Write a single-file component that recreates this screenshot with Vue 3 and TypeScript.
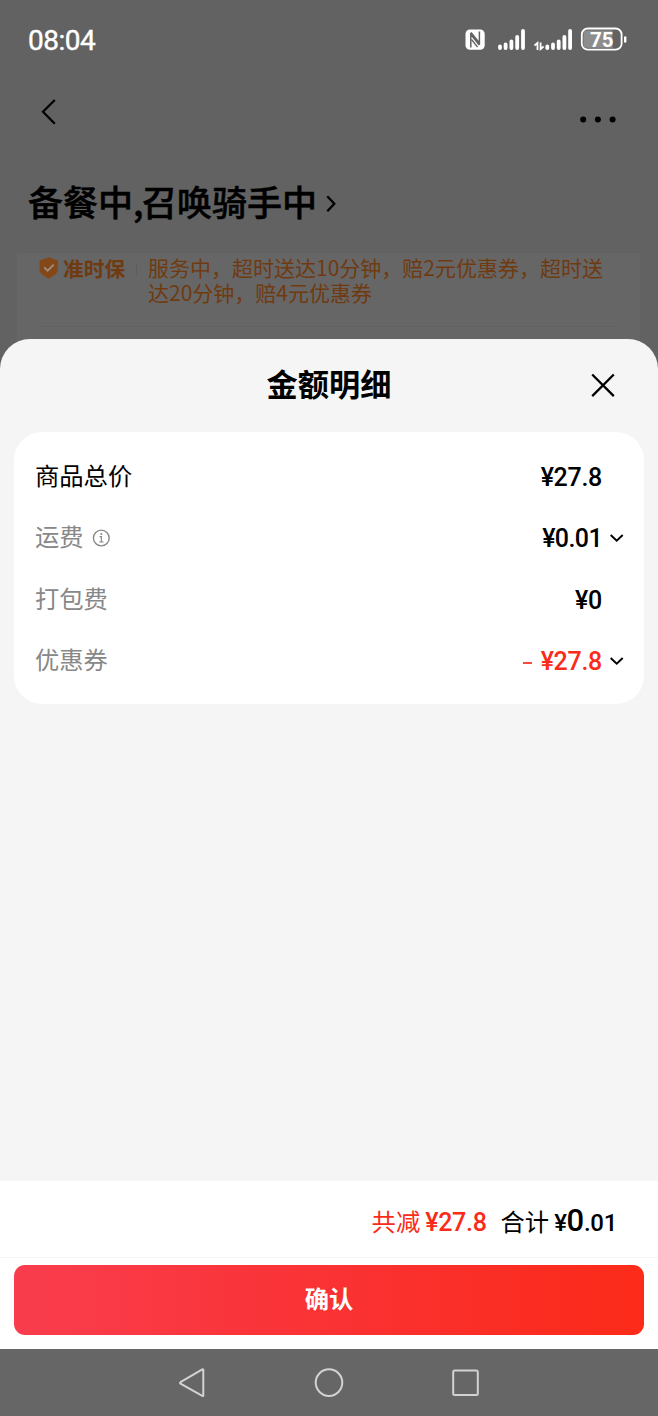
<script setup lang="ts">
interface FeeRow {
  label: string
  amount: string
  info?: boolean
  expandable?: boolean
  strong?: boolean
  discount?: boolean
}

const rows: FeeRow[] = [
  { label: '商品总价', amount: '¥27.8', strong: true },
  { label: '运费', amount: '¥0.01', info: true, expandable: true },
  { label: '打包费', amount: '¥0' },
  { label: '优惠券', amount: '¥27.8', expandable: true, discount: true },
]
</script>

<template>
  <div class="screen">
    <div class="backdrop">
      <header class="status">
        <span class="clock">08:04</span>
        <svg class="status-icons" width="166" height="28" viewBox="0 0 166 28">
          <rect x="2.500" y="4.500" width="19.200" height="20.200" rx="4.500" fill="#fff" />
          <path d="M7.800 22.500V9.500l8.500 10.500M16.400 6.500V18L8 7.500" fill="none" stroke="#626262" stroke-width="1.500" />
          <path d="M8.500 14.500l6 7.500" stroke="#626262" stroke-width="1.300" />
          <path d="M37 21.500v1.500M42.600 19.500v3.500M48.400 16.500v6.500M54.200 11.800v11.200M60 5.800v17.200" stroke="#fff" stroke-width="3.800" stroke-linecap="round" />
          <path d="M84.300 21.500v1.500M90 19.500v3.500M95.700 16.500v6.500M101.400 11.800v11.200M107.100 5.800v17.200" stroke="#fff" stroke-width="3.800" stroke-linecap="round" />
          <path d="M71.500 20.500l3-2.500v7M77.600 17.500v6.500l3-2.500" fill="none" stroke="#fff" stroke-width="1.800" />
          <rect x="118.800" y="3.500" width="39.800" height="21.200" rx="6" fill="none" stroke="#fff" stroke-width="1.800" />
          <path d="M123 5.500h26.500v17.200H123q-2.500 0-2.500-2.500v-12.200q0-2.500 2.500-2.500z" fill="#8d8d8d" />
          <path d="M162.200 12.500v4" stroke="#fff" stroke-width="2.400" stroke-linecap="round" />
          <text x="138.800" y="21.500" text-anchor="middle" class="battery">75</text>
        </svg>
      </header>

      <nav class="topbar">
        <svg width="20" height="30" viewBox="0 0 20 30">
          <path d="M16.800 4L5 15.700l11.800 12" fill="none" stroke="#000" stroke-width="2.300" />
        </svg>
        <svg width="38" height="8" viewBox="0 0 38 8">
          <circle cx="4.200" cy="4.500" r="3" /><circle cx="18.900" cy="4.500" r="3" /><circle cx="33.600" cy="4.500" r="3" />
        </svg>
      </nav>

      <h1 class="order-status">
        <span>备餐中<i class="comma">,</i>召唤骑手中</span>
        <svg width="12" height="20" viewBox="0 0 12 20">
          <path d="M1.300 3.300l7 7.500-7 7.500" fill="none" stroke="#000" stroke-width="2.300" />
        </svg>
      </h1>

      <section class="notice">
        <div class="notice-body">
          <svg class="shield" width="20" height="22" viewBox="0 0 20 22">
            <path d="M10.700.3l9.100 3.200v9c0 4.300-4.600 6.700-9.100 9.300-4.500-2.600-9.100-5-9.100-9.300v-9z" fill="#844818" />
            <path d="M6.200 10.300l3.500 3.400 6-6" fill="none" stroke="#9b9189" stroke-width="1.700" />
          </svg>
          <b class="badge">准时保</b>
          <p class="notice-text">服务中，超时送达10分钟，赔2元优惠券，超时送达20分钟，赔4元优惠券</p>
        </div>
      </section>
    </div>

    <main class="sheet">
      <div class="sheet-head">
        <h2>金额明细</h2>
        <svg class="close" width="26" height="26" viewBox="0 0 26 26">
          <path d="M2.200 1.500l21.600 21.600M23.800 1.500L2.200 23.100" stroke="#000" stroke-width="2.300" />
        </svg>
      </div>

      <div class="card">
        <div v-for="row in rows" :key="row.label" class="row" :class="{ strong: row.strong }">
          <span class="label">{{ row.label }}</span>
          <svg v-if="row.info" class="info" width="18" height="18" viewBox="0 0 18 18">
            <circle cx="9.300" cy="9" r="7.900" fill="none" stroke="#888" stroke-width="1.400" />
            <path d="M7.600 7.700H9.400v5.200M7.200 13h4.400" fill="none" stroke="#888" stroke-width="1.200" />
            <circle cx="9.300" cy="5" r="1" fill="#888" />
          </svg>
          <span v-if="row.discount" class="minus"></span>
          <span class="amount" :class="{ red: row.discount, long: row.info }">{{ row.amount }}</span>
          <span class="arrow">
            <svg v-if="row.expandable" width="14" height="10" viewBox="0 0 14 10">
              <path d="M.7 2l6 5.700 6-5.700" fill="none" stroke="#000" stroke-width="1.900" />
            </svg>
          </span>
        </div>
      </div>
    </main>

    <footer class="footer">
      <div class="totals">
        <span class="red">共减</span>
        <span class="num saved red">¥27.8</span>
        <span>合计</span>
        <span class="num total">¥<span class="big">0</span>.01</span>
      </div>
      <div class="action">
        <button class="confirm">确认</button>
      </div>
    </footer>

    <div class="navbar">
      <svg width="304" height="34" viewBox="0 0 304 34" fill="none" stroke="#d2d2d2" stroke-width="2">
        <path d="M26.300 4v25.400q0 1-1 .5L3.500 17.600q-1-.7 0-1.400L25.300 3.500q1-.5 1 .5z" />
        <circle cx="152" cy="16.600" r="13.300" />
        <rect x="276.200" y="4.400" width="24.600" height="24.600" rx="1.500" />
      </svg>
    </div>
  </div>
</template>

<style>
body {
  margin: 0;
}
</style>

<style scoped>
.screen {
  width: 658px;
  height: 1416px;
  display: flex;
  flex-direction: column;
  background: #626262;
  font-family: "Noto Sans CJK SC", sans-serif;
  color: #000;
  overflow: hidden;
}
.backdrop {
  height: 369px;
  margin-bottom: -30px;
  flex: none;
  overflow: hidden;
}
.status {
  height: 78px;
  display: flex;
  justify-content: space-between;
  align-items: center;
  padding: 0 28px;
  box-sizing: border-box;
}
.clock {
  padding-top: 3px;
  font: 400 28px/40px Roboto, sans-serif;
  letter-spacing: -0.500px;
  color: #fff;
  -webkit-text-stroke: 0.400px #fff;
}
.status-icons {
  margin-right: 1px;
}
.battery {
  font: 700 20.500px Roboto, sans-serif;
  fill: #fff;
}
.topbar {
  height: 30px;
  margin: 18px 41px 0 38px;
  display: flex;
  justify-content: space-between;
  align-items: center;
}
.topbar svg:last-child {
  margin-top: 16px;
}
.order-status {
  height: 44px;
  margin: 55px 0 0 28px;
  display: flex;
  align-items: center;
  gap: 9px;
  font-size: 35px;
  line-height: 40px;
  font-weight: 500;
  white-space: nowrap;
  -webkit-text-stroke: 0.500px #000;
}
.order-status > span {
  padding-bottom: 4px;
}
.comma {
  font-style: normal;
  display: inline-block;
  width: 9px;
}
.notice {
  height: 120px;
  margin: 28px 18px 0 17px;
  background: #666;
}
.notice-body {
  height: 74px;
  margin: 0 23px 0 21px;
  padding-top: 4px;
  display: flex;
  align-items: flex-start;
  box-sizing: border-box;
  border-bottom: 1px solid #616161;
}
.shield {
  flex: none;
  margin-right: 5px;
}
.badge {
  flex: none;
  width: 63px;
  font-size: 20.700px;
  line-height: 24px;
  margin-top: -1px;
  white-space: nowrap;
  color: #703a10;
}
.notice-text {
  margin: -2px 0 0 10px;
  padding-left: 12px;
  width: 460px;
  flex: none;
  font-size: 21px;
  line-height: 24.500px;
  color: #703a10;
  background: linear-gradient(#5d5d5d, #5d5d5d) 0 8px / 1px 12px no-repeat;
}
.sheet {
  position: relative;
  flex: 1;
  background: #f5f5f5;
  border-radius: 30px 30px 0 0;
}
.sheet-head {
  height: 93px;
  display: grid;
  grid-template-columns: 1fr auto 1fr;
  align-items: center;
}
.sheet-head h2 {
  grid-column: 2;
  margin: 0;
  padding-bottom: 5px;
  font-size: 31.200px;
  line-height: 40px;
  font-weight: 700;
}
.close {
  justify-self: end;
  margin-right: 42px;
}
.card {
  height: 272px;
  margin: 0 14px;
  padding: 14px 20px 0 21px;
  box-sizing: border-box;
  background: #fff;
  border-radius: 28px;
}
.row {
  height: 61.500px;
  display: flex;
  align-items: center;
}
.label {
  margin-right: auto;
  padding-bottom: 4px;
  font-size: 24.300px;
  line-height: 36px;
  color: #888;
}
.strong .label {
  color: #000;
}
.info {
  margin-right: auto;
}
.label:has(+ .info) {
  margin-right: 8px;
}
.minus {
  width: 9px;
  height: 2px;
  margin: 3px 9px 0 0;
  background: #fa4a40;
}
.amount {
  padding-top: 2px;
  font: 500 25px/36px Roboto, sans-serif;
  letter-spacing: -0.300px;
}
.long {
  letter-spacing: -0.600px;
}
.red {
  color: #fa2c19;
}
.arrow {
  width: 14px;
  margin-left: 8px;
  display: flex;
}
.footer {
  height: 168px;
  flex: none;
  background: #fff;
}
.totals {
  height: 77px;
  display: flex;
  justify-content: flex-end;
  align-items: baseline;
  padding: 21px 41px 0 0;
  box-sizing: border-box;
  font-size: 24.300px;
  line-height: 38px;
  border-bottom: 1px solid #f5f5f5;
}
.num {
  font-family: Roboto, sans-serif;
  font-weight: 500;
  font-size: 25px;
  letter-spacing: -0.300px;
  margin-left: 5px;
}
.saved {
  margin-right: 14px;
}
.total {
  font-size: 24px;
}
.big {
  font-size: 31px;
}
.action {
  padding: 7px 14px 0;
}
.confirm {
  display: block;
  width: 100%;
  height: 70px;
  padding: 0 0 4px;
  border: 0;
  border-radius: 11px;
  background: linear-gradient(90deg, #f93d4e, #fa3131 55%, #fc2b19);
  color: #fff;
  font: 700 24.300px/36px "Noto Sans CJK SC", sans-serif;
}
.navbar {
  height: 67px;
  flex: none;
  display: flex;
  justify-content: center;
  align-items: center;
  background: #666;
}
</style>
